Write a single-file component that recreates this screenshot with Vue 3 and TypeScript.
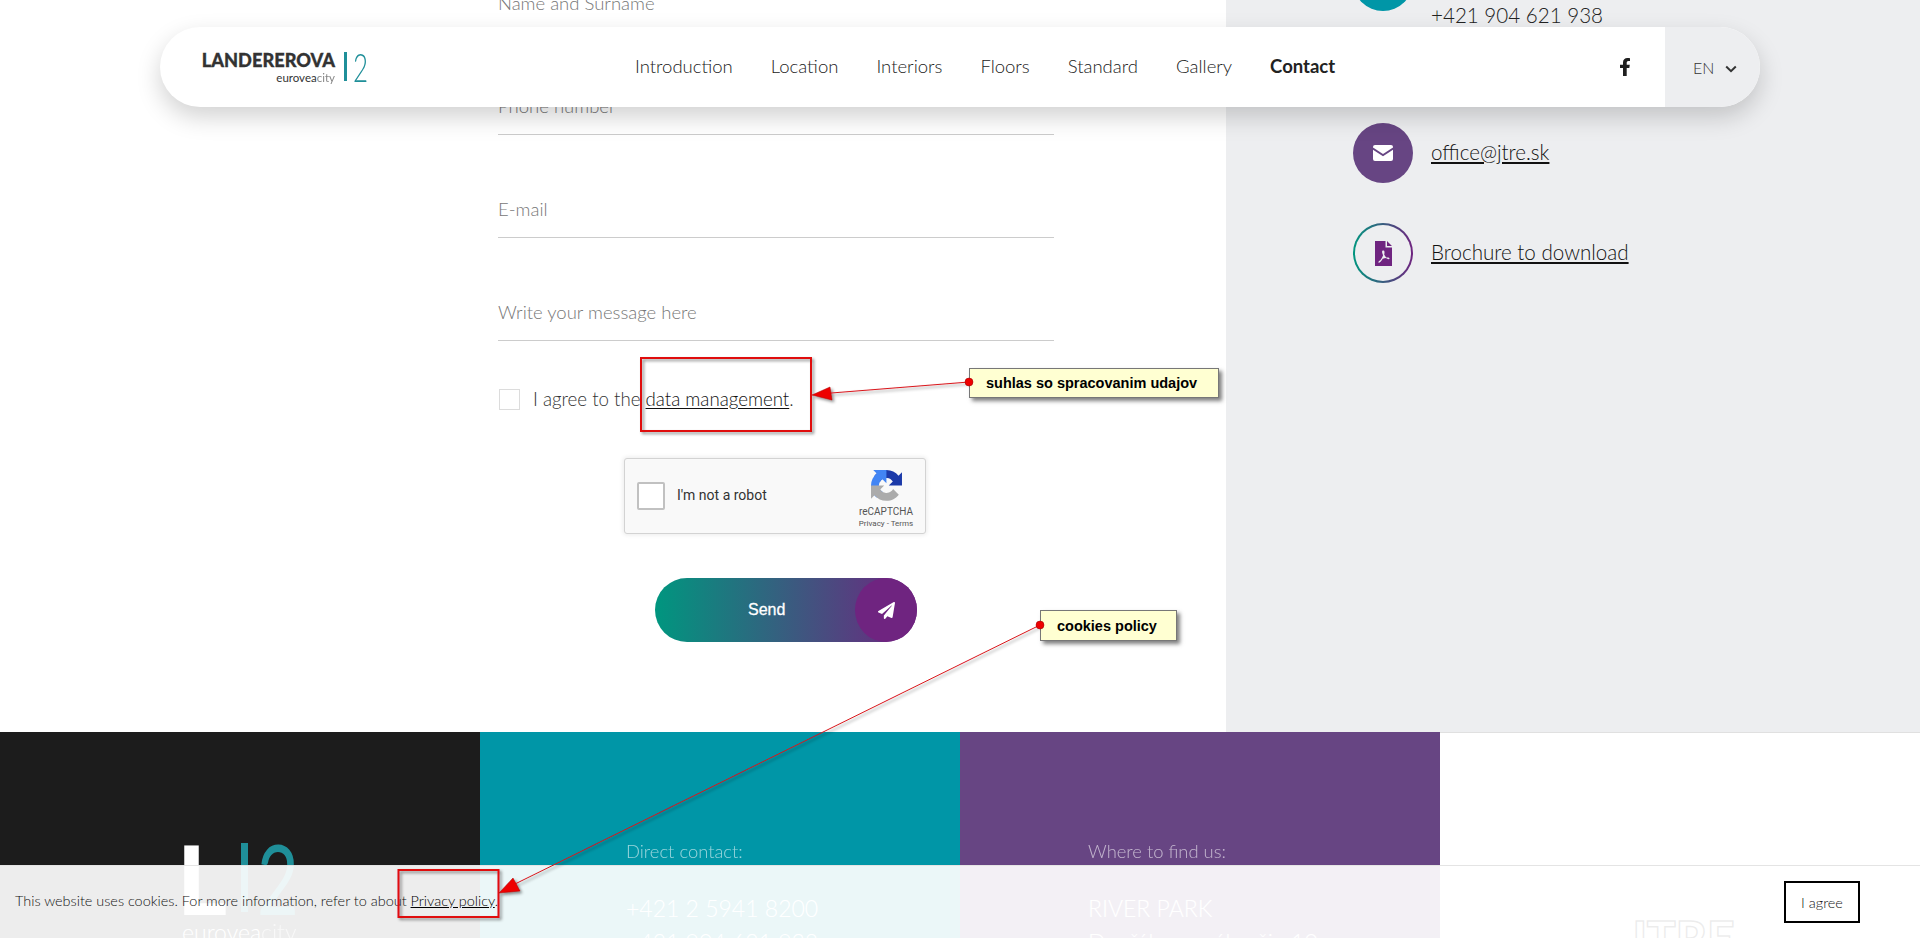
<template>
  <div class="page">
    <div class="scrolled">
      <main class="contact">
        <form class="form" @submit.prevent>
          <label v-for="field in fields" :key="field" class="field">{{ field }}</label>
          <div class="agree">
            <span class="check"></span>
            <span>I agree to the <a class="link">data management</a>.</span>
          </div>
          <div class="captcha">
            <span class="captcha-box"></span>
            <span class="captcha-text">I'm not a robot</span>
            <div class="captcha-brand">
              <svg width="31" height="31" viewBox="0 0 64 64">
                <path fill="#1c3aa9" d="M64 31.955l-.033-1.37V4.687l-7.160 7.160C50.948 4.674 42.033.093 32.050.093c-10.400 0-19.622 4.960-25.458 12.640l11.736 11.860a15.550 15.550 0 0 1 4.754-5.334c2.050-1.600 4.952-2.906 8.968-2.906.485 0 .860.057 1.135.163 4.976.393 9.288 3.140 11.828 7.124l-8.307 8.307 32.296.007" />
                <path fill="#4285f4" d="M31.862 0l-1.370.033H4.594l7.160 7.160C4.580 13.052 0 21.967 0 31.950c0 10.400 4.960 19.622 12.640 25.458l11.860-11.736a15.550 15.550 0 0 1-5.334-4.754c-1.600-2.050-2.906-4.952-2.906-8.968 0-.485.057-.860.163-1.135.393-4.976 3.140-9.288 7.124-11.828l8.307 8.307.007-32.296" />
                <path fill="#ababab" d="M.001 31.862l.033 1.370v25.898l7.160-7.160c5.860 7.173 14.775 11.754 24.760 11.754 10.400 0 19.622-4.960 25.458-12.640l-11.736-11.860a15.550 15.550 0 0 1-4.754 5.334c-2.050 1.600-4.952 2.906-8.968 2.906-.485 0-.860-.057-1.135-.163-4.976-.393-9.288-3.140-11.828-7.124l8.307-8.307-32.296-.007" />
              </svg>
              <span class="captcha-name">reCAPTCHA</span>
              <span class="captcha-links">Privacy - Terms</span>
            </div>
          </div>
          <button class="send" type="submit">
            <span class="send-label">Send</span>
            <span class="send-icon">
              <svg width="17" height="17" viewBox="0 0 512 512">
                <path fill="#fff" d="M476 3.200 12.500 270.600c-18.100 10.400-15.800 35.600 2.200 43.200L121 358.400l287.300-253.200c5.500-4.900 13.300 2.600 8.600 8.300L176 407v80.500c0 23.600 28.500 32.900 42.500 15.800L282 426l124.600 52.200c14.200 6 30.400-2.900 33-18.200l72-432C515 7.800 493.300-6.800 476 3.200z" />
              </svg>
            </span>
          </button>
        </form>
        <aside class="side">
          <div class="side-row side-phone">
            <span class="circle teal"></span>
            <div class="side-lines">
              <span>+421 2 5941 8200</span>
              <span>+421 904 621 938</span>
            </div>
          </div>
          <div class="side-row">
            <span class="circle violet">
              <svg width="20" height="16" viewBox="0 0 20 16">
                <path fill="#fff" d="M2 0h16a2 2 0 0 1 2 2v.6l-10 6.400L0 2.600V2a2 2 0 0 1 2-2z" />
                <path fill="#fff" d="M0 4.800v9.200a2 2 0 0 0 2 2h16a2 2 0 0 0 2-2V4.800l-10 6.400z" />
              </svg>
            </span>
            <a class="link">office@jtre.sk</a>
          </div>
          <div class="side-row">
            <span class="circle ring">
              <svg width="17" height="25" viewBox="0 0 17 25">
                <path fill="#6f2480" fill-rule="evenodd" d="M0 0h10.500v6.500H17V25H0zM12 0l5 5h-5zM8 9.500c-.8 0-1.100 1-.8 2.300.2.800.5 1.600.9 2.400-.8 2-1.900 4-3.100 5.300-1 .4-1.800 1.200-1.500 1.900.4.700 1.500.2 2.300-.8.700-.9 1.300-1.800 1.900-2.800 1.100-.4 2.300-.7 3.400-.8.800.7 1.900 1.300 2.700 1.200.8-.1.900-.9.400-1.300-.6-.5-1.800-.5-3-.3-.8-.9-1.500-2-2-3.100.4-1.400.6-3.900-.6-4z" />
              </svg>
            </span>
            <a class="link">Brochure to download</a>
          </div>
        </aside>
      </main>

      <footer class="footer">
        <div class="foot-col foot-logo">
          <div class="foot-mark">
            <span class="foot-l">L</span>
            <span class="foot-bar"></span>
            <span class="foot-two">2</span>
          </div>
          <span class="foot-city">eurovea<em>city</em></span>
        </div>
        <div class="foot-col foot-direct">
          <div class="foot-label">Direct contact:</div>
          <div class="foot-big">+421 2 5941 8200</div>
          <div class="foot-big">+421 904 621 938</div>
        </div>
        <div class="foot-col foot-where">
          <div class="foot-label">Where to find us:</div>
          <div class="foot-big">RIVER PARK</div>
          <div class="foot-big">Dvořákovo nábrežie 10</div>
        </div>
        <div class="foot-col foot-jtre"><span>JTRE</span></div>
      </footer>
    </div>

    <header class="nav">
      <div class="brand">
        <div class="brand-text">
          <strong>LANDEREROVA</strong>
          <span>eurovea<em>city</em></span>
        </div>
        <span class="brand-bar"></span>
        <span class="brand-two">2</span>
      </div>
      <nav class="menu">
        <a v-for="item in menu" :key="item" :class="{ current: item === 'Contact' }">{{ item }}</a>
      </nav>
      <svg class="fb" width="10" height="18" viewBox="0 0 10 18">
        <path fill="#1f1f1f" d="M9.300 10.100l.5-3.300H6.700V4.700c0-.9.400-1.800 1.800-1.800H10V.2C10 .2 8.700 0 7.400 0 4.800 0 3 1.600 3 4.400v2.400H0v3.300h3V18h3.700v-7.900z" />
      </svg>
      <div class="lang">
        <span>EN</span>
        <svg class="chevron" width="12" height="8" viewBox="0 0 12 8">
          <path d="M1.200 1.500 6 6.200l4.800-4.700" fill="none" stroke="#333" stroke-width="2" />
        </svg>
      </div>
    </header>

    <div class="cookies">
      <span class="cookie-text">This website uses cookies. For more information, refer to about <a class="cookie-link">Privacy policy</a>.</span>
      <button class="cookie-btn">I agree</button>
    </div>

    <div class="note note-data">suhlas so spracovanim udajov</div>
    <div class="note note-cookies">cookies policy</div>
    <svg class="arrows" width="1920" height="938" viewBox="0 0 1920 938">
      <defs>
        <filter id="drop" x="-20%" y="-20%" width="140%" height="140%">
          <feDropShadow dx="2" dy="2" stdDeviation="1.500" flood-color="#000" flood-opacity=".45" />
        </filter>
      </defs>
      <rect x="641" y="358" width="170" height="73" fill="none" stroke="#e00a10" stroke-width="2" filter="url(#drop)" />
      <rect x="398.500" y="870" width="100" height="47" fill="none" stroke="#e00a10" stroke-width="2" filter="url(#drop)" />
      <g filter="url(#drop)">
        <line x1="969" y1="382" x2="825" y2="393.500" stroke="#d9151b" stroke-width="1" />
        <path d="M812 395l18-8 2 13z" fill="#ee0000" stroke="#a00" stroke-width=".5" />
        <line x1="1040" y1="625" x2="515" y2="884" stroke="#d9151b" stroke-width="1" />
        <path d="M499 893l14-15 7 13z" fill="#ee0000" stroke="#a00" stroke-width=".5" />
      </g>
      <circle cx="969" cy="382" r="4" fill="#ee0000" stroke="#900" stroke-width=".5" />
      <circle cx="1040" cy="625" r="4" fill="#ee0000" stroke="#900" stroke-width=".5" />
    </svg>
  </div>
</template>

<script setup lang="ts">
const fields: string[] = ['Name and Surname', 'Phone number', 'E-mail', 'Write your message here']
const menu: string[] = ['Introduction', 'Location', 'Interiors', 'Floors', 'Standard', 'Gallery', 'Contact']
</script>

<style>
html,
body {
  margin: 0;
  background: #fff;
}
</style>

<style scoped>
.page {
  position: relative;
  width: 1920px;
  height: 938px;
  overflow: hidden;
  font-family: Lato, "Noto Sans", sans-serif;
  font-weight: 300;
  color: #222;
}

.scrolled {
  margin-top: -71px;
}

.contact {
  display: grid;
  grid-template-columns: 1226px 694px;
  height: 803px;
}

.form {
  padding-left: 498px;
  width: 556px;
  display: flex;
  flex-direction: column;
}

.field {
  height: 103px;
  box-sizing: border-box;
  border-bottom: 1px solid #ccc;
  display: flex;
  align-items: flex-end;
  padding-bottom: 16px;
  font-size: 18.500px;
  line-height: 24px;
  color: #777;
}

.agree {
  display: flex;
  align-items: center;
  margin-top: 48px;
  gap: 13px;
  font-size: 18.700px;
  height: 20px;
  white-space: nowrap;
  color: #333;
}

.check {
  width: 19px;
  height: 19px;
  margin-left: 1px;
  border: 1px solid #dcdcdc;
}

.link {
  color: #111;
  text-decoration: underline;
  text-underline-offset: 2px;
}

.captcha {
  box-sizing: border-box;
  width: 302px;
  height: 76px;
  margin: 49px 0 0 126px;
  background: #f9f9f9;
  border: 1px solid #d3d3d3;
  border-radius: 3px;
  box-shadow: 0 0 4px 1px rgba(0, 0, 0, 0.08);
  display: flex;
  align-items: center;
  font-family: Roboto, sans-serif;
  font-weight: 400;
  color: #333;
}

.captcha-box {
  box-sizing: border-box;
  width: 28px;
  height: 28px;
  margin-left: 12px;
  background: #fff;
  border: 2px solid #c1c1c1;
  border-radius: 2px;
}

.captcha-text {
  margin: 0 0 2px 12px;
  font-size: 14px;
}

.captcha-brand {
  margin-left: auto;
  width: 62px;
  margin-right: 8px;
  padding-top: 7px;
  display: flex;
  flex-direction: column;
  align-items: center;
  color: #555;
}

.captcha-name {
  font-size: 10px;
  line-height: 12px;
  margin-top: 5px;
}

.captcha-links {
  font-size: 8px;
  line-height: 12px;
}

.send {
  position: relative;
  width: 262px;
  height: 64px;
  margin: 44px 0 0 157px;
  padding: 0;
  border: 0;
  border-radius: 32px;
  background: linear-gradient(90deg, #00967f 0%, #702480 100%);
  color: #fff;
  font-family: "Liberation Sans", sans-serif;
  font-size: 16px;
  display: flex;
  align-items: center;
  justify-content: space-between;
}

.send-label {
  margin-left: 93px;
  -webkit-text-stroke: 0.3px #fff;
}

.send-icon {
  width: 62px;
  height: 64px;
  border-radius: 50%;
  background: #6f2480;
  display: flex;
  align-items: center;
  justify-content: center;
}

.side {
  background: #edeef0;
  padding: 22px 0 0 127px;
  display: flex;
  flex-direction: column;
  font-size: 20.600px;
  color: #222;
}

.side-row {
  display: flex;
  align-items: center;
  gap: 18px;
  height: 60px;
  margin-bottom: 40px;
}

.side-row .link {
  margin-bottom: 3px;
}

.side-phone {
  align-items: flex-start;
  margin-bottom: 112px;
}

.side-lines {
  display: flex;
  flex-direction: column;
  padding-top: 13px;
  line-height: 34px;
  white-space: nowrap;
}

.circle {
  box-sizing: border-box;
  flex: none;
  width: 60px;
  height: 60px;
  border-radius: 50%;
  display: flex;
  align-items: center;
  justify-content: center;
}

.teal {
  background: #0096a7;
}

.violet {
  background: #674583;
}

.ring {
  border: 2px solid transparent;
  background: linear-gradient(#edeef0, #edeef0) padding-box, linear-gradient(90deg, #00967f, #702480) border-box;
}

.footer {
  display: grid;
  grid-template-columns: repeat(4, 480px);
  height: 300px;
  color: #fff;
}

.foot-col {
  box-sizing: border-box;
  padding-top: 106px;
}

.foot-logo {
  background: #1c1c1c;
  padding: 111px 0 0 177px;
}

.foot-mark {
  display: flex;
  height: 70px;
  line-height: 70px;
  font-size: 96px;
}

.foot-l {
  width: 64px;
  font-weight: 900;
  color: #fff;
}

.foot-bar {
  width: 7px;
  height: 69px;
  background: #1f8f99;
}

.foot-two {
  margin-left: 9px;
  font-weight: 400;
  color: #1f8f99;
  transform: scaleX(0.75);
  transform-origin: left center;
}

.foot-city {
  display: block;
  margin: 4px 0 0 5px;
  font-size: 23px;
  line-height: 30px;
  color: #fff;
}

.foot-city em,
.brand-text em {
  font-style: normal;
  opacity: 0.6;
}

.foot-direct {
  background: #0096a7;
  padding-left: 146px;
}

.foot-where {
  background: #674583;
  padding-left: 128px;
}

.foot-jtre {
  background: #fff;
  border-top: 1px solid #e0e0e0;
  padding: 185px 0 0 186px;
  font-size: 48px;
  font-weight: 900;
  line-height: 40px;
  color: #fff;
  -webkit-text-stroke: 1.500px #111;
}

.foot-label {
  font-size: 18.400px;
  line-height: 26px;
  opacity: 0.6;
}

.foot-big {
  font-size: 23px;
  line-height: 34px;
  white-space: nowrap;
}

.foot-label + .foot-big {
  margin-top: 27px;
}

.nav {
  position: absolute;
  top: 27px;
  left: 160px;
  width: 1600px;
  height: 80px;
  border-radius: 40px;
  background: #fff;
  box-shadow: 0 10px 24px rgba(0, 0, 0, 0.18);
  display: flex;
  align-items: center;
}

.brand {
  display: flex;
  align-items: center;
  flex: none;
  width: 168px;
  margin-left: 41px;
}

.brand-text {
  flex: none;
  display: flex;
  flex-direction: column;
  align-items: flex-end;
  width: 134px;
  line-height: 1;
  color: #333;
}

.brand-text strong {
  font-size: 18.200px;
  font-weight: 900;
  white-space: nowrap;
  -webkit-text-stroke: 0.3px #333;
}

.brand-text span {
  font-size: 11.500px;
  font-weight: 400;
  margin-top: 3px;
}

.brand-bar {
  flex: none;
  width: 3px;
  height: 29px;
  margin-left: 9px;
  background: #1f8f99;
}

.brand-two {
  flex: none;
  width: 15px;
  margin-left: 6px;
  font-size: 40px;
  line-height: 30px;
  color: #1f8f99;
  transform: scaleX(0.65);
  transform-origin: left center;
}

.menu {
  display: flex;
  gap: 38px;
  margin: -2px 0 0 266px;
  font-size: 18.500px;
  color: #222;
}

.current {
  font-weight: 700;
  color: #222;
}

.fb {
  margin-left: auto;
  margin-right: 35px;
}

.lang {
  width: 95px;
  height: 80px;
  border-radius: 0 40px 40px 0;
  background: #edeef0;
  display: flex;
  align-items: center;
  gap: 11px;
  padding-left: 28px;
  box-sizing: border-box;
  font-size: 16px;
  color: #333;
}

.chevron {
  margin-top: 4px;
}

.cookies {
  position: absolute;
  left: 0;
  right: 0;
  bottom: 0;
  height: 73px;
  box-sizing: border-box;
  border-top: 1px solid #e4e4e4;
  background: rgba(255, 255, 255, 0.92);
  padding: 0 60px 0 15px;
  display: flex;
  align-items: center;
  justify-content: space-between;
  font-size: 14.450px;
  color: #111;
}

.cookie-text {
  margin-bottom: 4px;
}

.cookie-link {
  color: #000;
  text-decoration: underline;
}

.cookie-btn {
  width: 76px;
  height: 42px;
  background: transparent;
  border: 2px solid #000;
  font: inherit;
  color: #111;
}

.arrows {
  position: absolute;
  left: 0;
  top: 0;
  pointer-events: none;
}

.note {
  position: absolute;
  box-sizing: border-box;
  background: #ffffd2;
  border: 1px solid #777;
  box-shadow: 3px 3px 4px rgba(0, 0, 0, 0.5);
  font-family: "Liberation Sans", sans-serif;
  font-weight: 700;
  font-size: 14.500px;
  color: #000;
  display: flex;
  align-items: center;
  padding-left: 16px;
}

.note-data {
  left: 969px;
  top: 368px;
  width: 250px;
  height: 30px;
}

.note-cookies {
  left: 1040px;
  top: 610px;
  width: 137px;
  height: 31px;
}
</style>
